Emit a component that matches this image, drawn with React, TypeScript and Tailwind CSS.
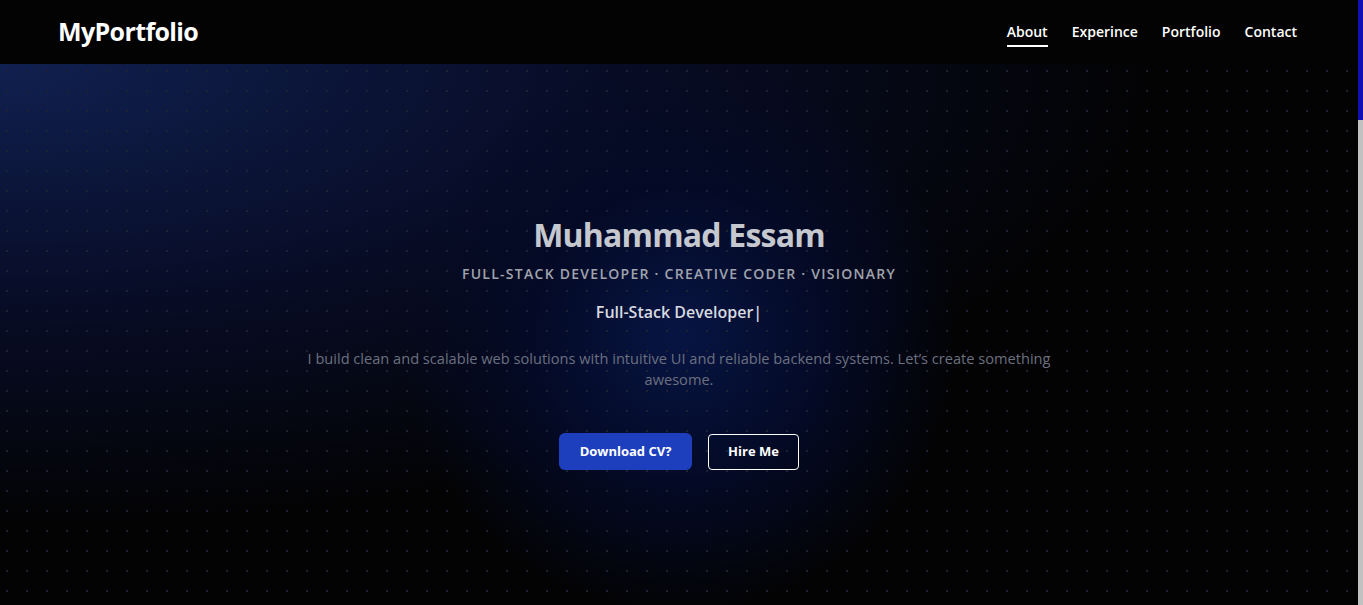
import React from 'react';

const navLinks = ['About', 'Experince', 'Portfolio', 'Contact'];

const App: React.FC = () => {
  return (
    <div
      className="h-screen w-full flex overflow-hidden bg-black text-white"
      style={{ fontFamily: "'Open Sans', sans-serif" }}
    >
      <main className="flex-1 min-w-0">
        {/* Navbar */}
        <header className="h-16 bg-[#030303] flex items-center justify-between px-[58px]">
          <span className="text-[25px] font-bold tracking-tight">MyPortfolio</span>
          <nav className="flex items-center gap-6 mr-[3px]">
            {navLinks.map((link, i) => (
              <a
                key={link}
                href="#"
                className={`text-[14px] font-semibold pt-[3px] pb-[3px] border-b-2 ${
                  i === 0 ? 'border-white' : 'border-transparent'
                }`}
              >
                {link}
              </a>
            ))}
          </nav>
        </header>

        {/* Hero */}
        <section className="relative h-[541px] overflow-hidden bg-[#030304]">
          <div className="absolute inset-0 bg-[radial-gradient(ellipse_at_top_left,#10204f_0%,#080d28_30%,transparent_60%)]" />
          <div className="absolute inset-0 bg-[radial-gradient(circle_at_50%_50%,#071543_0%,#040a26_20%,transparent_38%)]" />
          <div className="absolute inset-0 bg-[radial-gradient(#1c2233_1px,transparent_1.5px)] bg-[length:20px_20px] bg-[position:-3px_-3px]" />

          <div className="relative flex flex-col items-center text-center pt-[153px]">
            <h1 className="text-[32px] font-bold text-[#c6c8d0] tracking-tight leading-9">Muhammad Essam</h1>
            <p className="mt-[10px] text-[14px] font-semibold tracking-[0.09em] text-[#a0a3ad]">
              FULL-STACK DEVELOPER · CREATIVE CODER · VISIONARY
            </p>
            <p className="mt-[16px] text-[16px] font-semibold text-[#d8dae0]">Full-Stack Developer|</p>
            <p className="mt-[24px] max-w-[760px] text-[14.6px] leading-[21px] text-[#6b7080]">
              I build clean and scalable web solutions with intuitive UI and reliable backend systems. Let’s create something awesome.
            </p>
            <div className="mt-[43px] flex items-center gap-4">
              <button className="w-[133px] h-[37px] rounded-md bg-[#1d3fbd] text-[13px] font-bold text-white">
                Download CV?
              </button>
              <button className="w-[91px] h-[36px] rounded-[4px] border border-white text-[13px] font-bold text-white">
                Hire Me
              </button>
            </div>
          </div>
        </section>
      </main>

      {/* Scrollbar */}
      <div className="w-[5px] flex flex-col">
        <div className="h-[120px] bg-[#1010b4]" />
        <div className="flex-1 bg-[#c1c1c1]" />
      </div>
    </div>
  );
};

export default App;
